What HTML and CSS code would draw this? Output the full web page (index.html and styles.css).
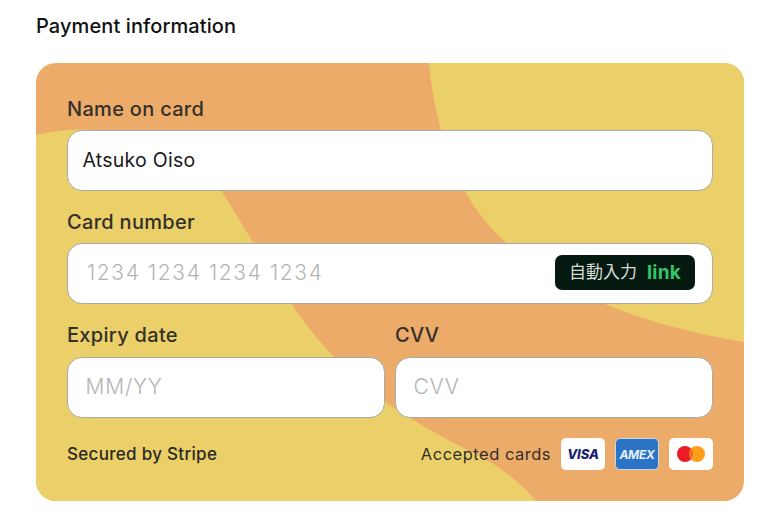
FILE: index.html
```html
<!DOCTYPE html>
<html lang="en">
<head>
<meta charset="utf-8">
<title>Payment information</title>
<link rel="stylesheet" href="styles.css">
</head>
<body>
<main class="page">
  <h1 class="title">Payment information</h1>
  <form class="card">
    <svg class="card-bg" viewBox="36 63 708 438" preserveAspectRatio="none" aria-hidden="true">
      <rect x="36" y="63" width="708" height="438" fill="#edab69"/>
      <path d="M429 63C433 110 448 170 478 212C520 268 600 318 744 342V63Z" fill="#ebcf68"/>
      <path d="M36 135C70 127 110 127 150 140C180 150 205 170 222 192C260 250 290 315 345 368C385 410 450 440 490 462C510 474 525 488 536 501H36Z" fill="#ebcf68"/>
    </svg>
    <div class="field">
      <label class="label">Name on card</label>
      <div class="input filled">Atsuko Oiso</div>
    </div>
    <div class="field">
      <label class="label">Card number</label>
      <div class="input placeholder card-number">
        <span class="digits">1234 1234 1234 1234</span>
        <span class="autofill"><span class="autofill-text">自動入力</span><b class="link">link</b></span>
      </div>
    </div>
    <div class="row">
      <div class="field">
        <label class="label">Expiry date</label>
        <div class="input placeholder">MM/YY</div>
      </div>
      <div class="field">
        <label class="label">CVV</label>
        <div class="input placeholder">CVV</div>
      </div>
    </div>
    <div class="footer">
      <span class="secured">Secured by Stripe</span>
      <div class="accepted">
        <span class="accepted-text">Accepted cards</span>
        <span class="badge"><span class="visa">VISA</span></span>
        <span class="badge amex"><span class="amex-text">AMEX</span></span>
        <span class="badge">
          <svg class="mc" viewBox="0 0 30 18" aria-hidden="true">
            <circle cx="9" cy="9" r="8" fill="#eb1c26"/>
            <circle cx="21" cy="9" r="8" fill="#f99f1b"/>
            <path d="M15 3.7a8 8 0 0 1 0 10.6a8 8 0 0 1 0-10.6Z" fill="#f26a20"/>
          </svg>
        </span>
      </div>
    </div>
  </form>
</main>
</body>
</html>
```

FILE: styles.css
```css
* { box-sizing: border-box; }
html, body { margin: 0; background: #fff; }
body {
  width: 760px;
  height: 525px;
  overflow: hidden;
  font-family: Inter, "Noto Sans CJK JP", sans-serif;
  color: #1f1f1f;
}
.page { padding: 13px 16px 0 36px; }
.title {
  margin: 0 0 23px;
  font-size: 20px;
  line-height: 27px;
  font-weight: 500;
  letter-spacing: 0.1px;
  color: #111;
}
.card {
  position: relative;
  width: 708px;
  height: 438px;
  padding: 32px 31px 0;
  border-radius: 20px;
  overflow: hidden;
}
.card-bg {
  position: absolute;
  inset: 0;
  width: 100%;
  height: 100%;
}
.field, .row, .footer { position: relative; }
.field { margin-bottom: 17px; }
.label {
  display: block;
  margin-bottom: 6px;
  font-size: 20px;
  line-height: 29px;
  font-weight: 500;
  letter-spacing: 0.3px;
  color: #33302b;
}
.row .label { margin-bottom: 7px; }
.input {
  display: flex;
  align-items: center;
  height: 61px;
  padding: 0 15px 2px 14.5px;
  background: #fff;
  border: 1.5px solid #a9aaa5;
  border-radius: 15px;
  font-size: 19.5px;
  letter-spacing: 0.25px;
}
.filled { color: #1a1a1a; }
.placeholder {
  color: #b4b4b4;
  padding-left: 17.5px;
  font-size: 21px;
  font-weight: 300;
  letter-spacing: 0.8px;
}
.digits { margin-left: 1.5px; letter-spacing: 1.6px; }
.card-number { justify-content: space-between; padding-right: 17px; }
.autofill {
  display: flex;
  align-items: center;
  gap: 10px;
  width: 140px;
  height: 35px;
  padding-left: 14px;
  background: #04190f;
  border-radius: 7px;
  letter-spacing: 0;
}
.autofill-text { color: #d8dcd9; font-size: 17px; font-weight: 400; line-height: 1; }
.link { color: #33c46c; font-size: 19px; font-weight: 700; letter-spacing: 0.2px; }
.row {
  display: grid;
  grid-template-columns: 318px 318px;
  gap: 10px;
}
.footer {
  display: flex;
  align-items: center;
  justify-content: space-between;
  margin-top: 3px;
  height: 32px;
}
.secured { font-size: 17px; font-weight: 500; letter-spacing: 0.3px; color: #2b2a26; }
.accepted { display: flex; align-items: center; }
.accepted-text { margin-right: 10px; font-size: 16.5px; color: #33302b; letter-spacing: 0.5px; }
.badge {
  display: flex;
  align-items: center;
  justify-content: center;
  width: 44px;
  height: 32px;
  margin-left: 10px;
  background: #fff;
  border-radius: 5px;
}
.accepted-text + .badge { margin-left: 0; }
.visa {
  color: #1a1f71;
  font-size: 13px;
  font-weight: 800;
  font-style: italic;
  letter-spacing: -0.1px;
}
.amex { background: #2a73c5; border: 1px solid #c6d7ea; }
.amex-text {
  color: #e6f0fb;
  font-size: 12px;
  font-weight: 700;
  font-style: italic;
  letter-spacing: -0.3px;
}
.mc { width: 30px; height: 18px; }
```
